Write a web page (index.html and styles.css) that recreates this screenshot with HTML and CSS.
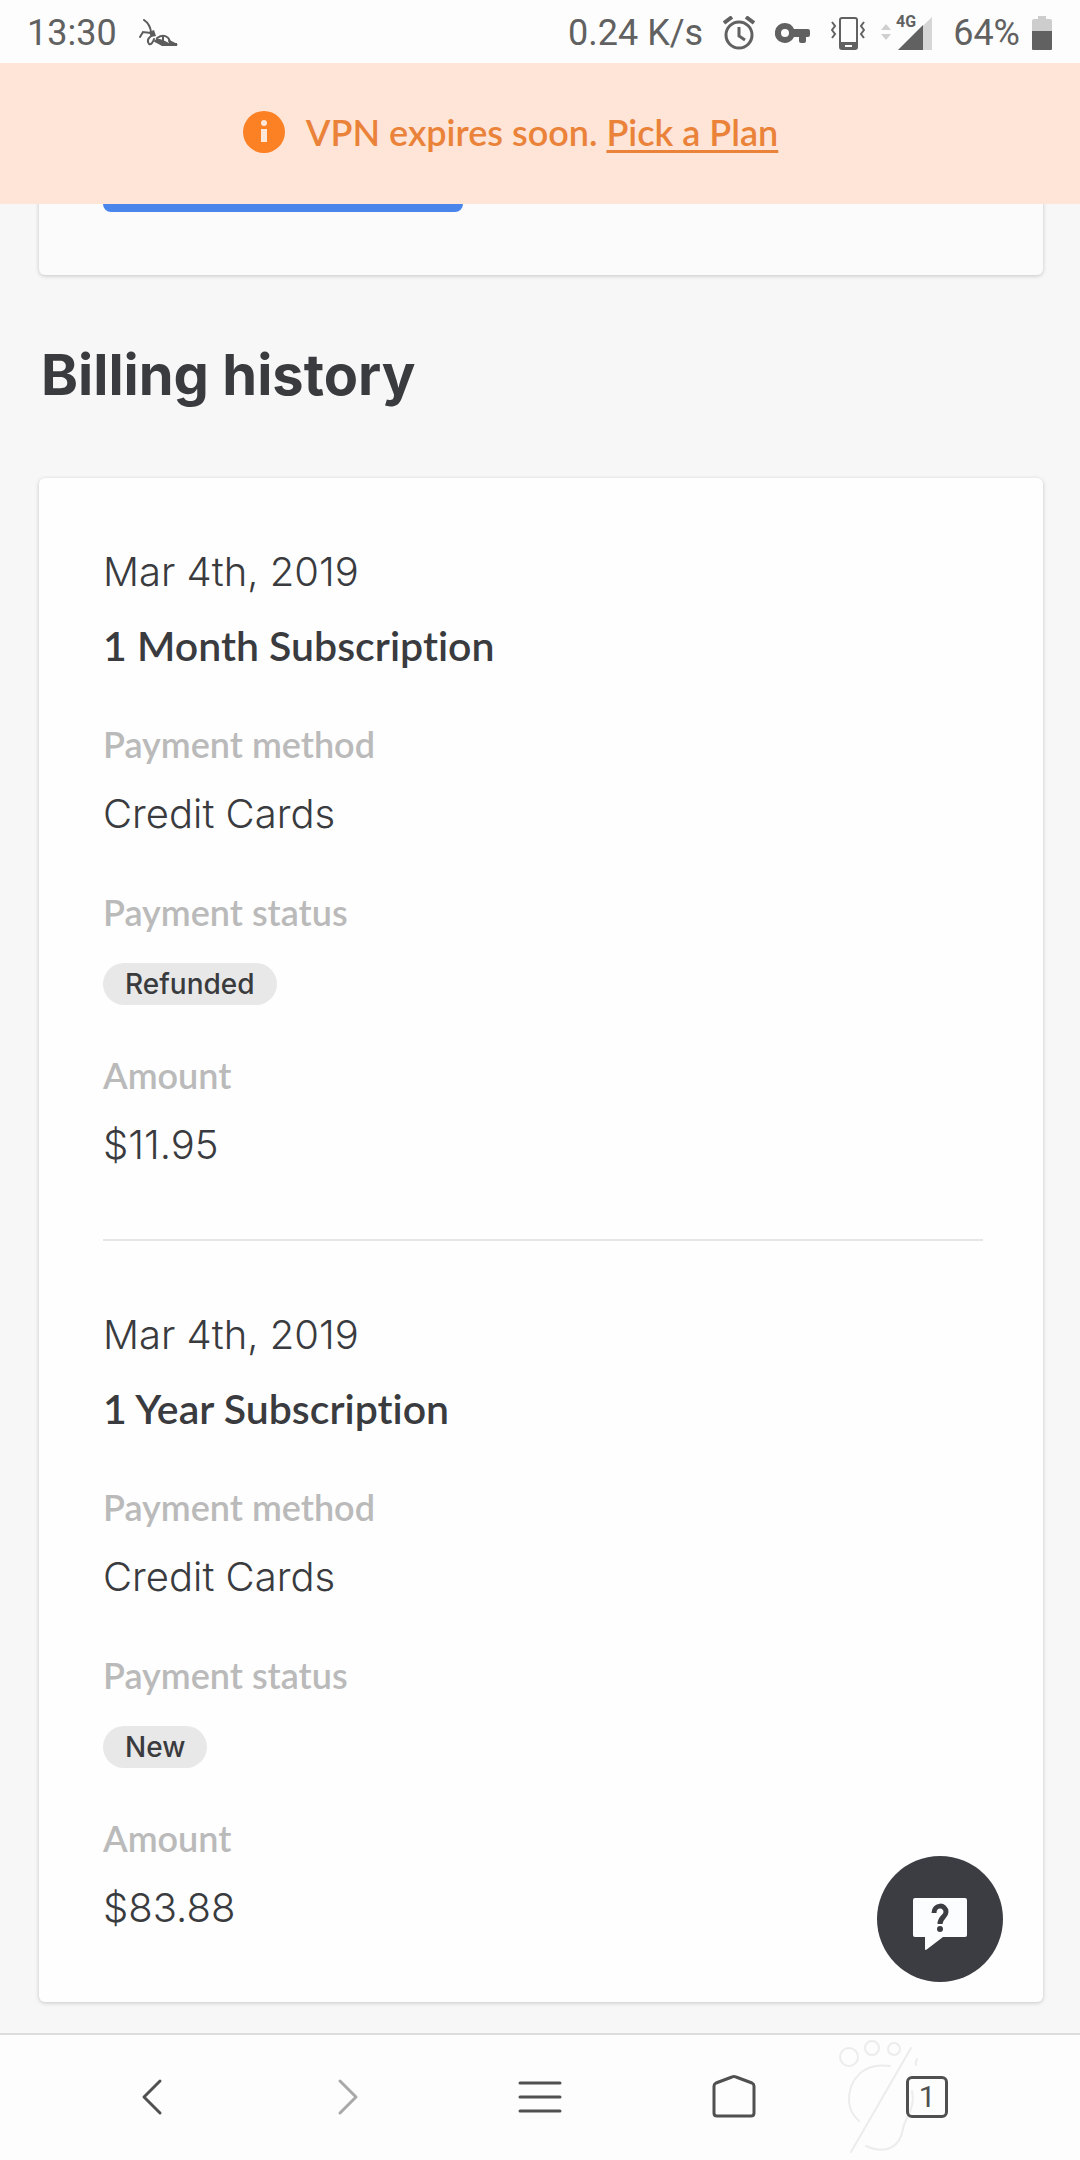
FILE: index.html
```
<!DOCTYPE html>
<html lang="en">
<head>
  <meta charset="UTF-8" />
  <meta name="viewport" content="width=device-width, initial-scale=1" />
  <title>Billing history</title>
  <link rel="stylesheet" href="styles.css">
</head>
<body>

  <header class="top">
    <div class="status-bar">
      <div class="status-left">
        <span>13:30</span>
        <svg class="ant" width="40" height="28" viewBox="0 0 40 28" aria-hidden="true">
          <g fill="none" stroke="#5c5c5c" stroke-width="2" stroke-linecap="round">
            <path d="M5 1 Q11 5 12 13" />
            <path d="M1 18 L4 13 L12 14" />
            <path d="M12 17 Q7 21 10 25 Q13 26 15 20" />
            <path d="M18 19 Q24 15 28 18 Q31 20 31 25" />
            <path d="M16 22 L27 26 H38 L30 22" />
            <path d="M20 21 L26 25 M24 18 L24 24" />
          </g>
          <path d="M10 13 L15 11 L17 17 L12 18 Z M17 19 L24 21 L30 24 L38 24 V27 H23 L16 23 Z" fill="#5c5c5c" />
        </svg>
      </div>
      <div class="status-right">
        <span class="speed">0.24 K/s</span>
        <!-- alarm -->
        <svg width="32" height="34" viewBox="0 0 32 34" aria-hidden="true">
          <g fill="none" stroke="#616161" stroke-width="3">
            <circle cx="16" cy="19" r="13" />
            <path d="M1 7 L9 1 M31 7 L23 1" stroke-width="4" />
            <path d="M16 11 V20 L22 24" />
          </g>
        </svg>
        <!-- vpn key -->
        <svg class="key" width="36" height="22" viewBox="0 0 36 22" aria-hidden="true">
          <path fill="#616161" fill-rule="evenodd" d="M10 1 A10 10 0 1 0 19 15 H24 V19 Q24 21 26 21 H29 Q31 21 31 19 V15 H33 Q35 15 35 13 V9 Q35 7 33 7 H19 A10 10 0 0 0 10 1 Z M10 7 A4 4 0 1 1 10 15 A4 4 0 1 1 10 7 Z" />
        </svg>
        <!-- vibrate -->
        <svg class="vibrate" width="34" height="34" viewBox="0 0 34 34" aria-hidden="true">
          <g fill="none" stroke="#616161" stroke-width="2">
            <rect x="9" y="2" width="17" height="31" rx="2" />
            <path d="M1 6 L4 10 L1 14 L4 18 L1 22" />
            <path d="M33 6 L30 10 L33 14 L30 18 L33 22" />
          </g>
          <path fill="#616161" fill-rule="evenodd" d="M9 26 H26 V33 H9 Z M14 29 V31 H21 V29 Z" />
        </svg>
        <!-- signal -->
        <svg class="signal" width="52" height="44" viewBox="0 -4 52 44" aria-hidden="true">
          <path d="M0 15 L5 9 L10 15 Z M0 19 L5 25 L10 19 Z" fill="#cfcfcf" />
          <path d="M17 35 L51 2 V35 Z" fill="#d6d6d6" />
          <path d="M17 35 L42 10 V35 Z" fill="#616161" />
          <text x="15" y="12" class="net">4G</text>
        </svg>
        <span>64%</span>
        <!-- battery -->
        <svg class="battery" width="20" height="34" viewBox="0 0 20 34" aria-hidden="true">
          <path d="M6 0 H14 V3 H18 Q20 3 20 5 V16 H0 V5 Q0 3 2 3 H6 Z" fill="#cdcdcd" />
          <path d="M0 15 H20 V33 Q20 34 19 34 H1 Q0 34 0 33 Z" fill="#616161" />
        </svg>
      </div>
    </div>

    <div class="notice">
      <svg width="44" height="44" viewBox="0 0 44 44" aria-hidden="true">
        <circle cx="22" cy="22" r="21" fill="#fc8024" />
        <circle cx="22" cy="13" r="3" fill="#fee6d9" />
        <path d="M19 19 H25 V32 H19 Z" fill="#fee6d9" />
      </svg>
      <p>VPN expires soon. <a href="#plans">Pick a Plan</a></p>
    </div>
  </header>

  <main class="content">
    <section class="card plan-card">
      <button class="plan-button" type="button" aria-label="Subscription"></button>
    </section>

    <h1>Billing history</h1>

    <section class="card">
      <article class="entry">
        <p class="date">Mar 4th, 2019</p>
        <h2>1 Month Subscription</h2>
        <dl>
          <div class="field">
            <dt>Payment method</dt>
            <dd>Credit Cards</dd>
          </div>
          <div class="field">
            <dt>Payment status</dt>
            <dd class="state"><span class="badge">Refunded</span></dd>
          </div>
          <div class="field">
            <dt>Amount</dt>
            <dd>$11.95</dd>
          </div>
        </dl>
      </article>

      <article class="entry">
        <p class="date">Mar 4th, 2019</p>
        <h2>1 Year Subscription</h2>
        <dl>
          <div class="field">
            <dt>Payment method</dt>
            <dd>Credit Cards</dd>
          </div>
          <div class="field">
            <dt>Payment status</dt>
            <dd class="state"><span class="badge">New</span></dd>
          </div>
          <div class="field">
            <dt>Amount</dt>
            <dd>$83.88</dd>
          </div>
        </dl>
      </article>
    </section>
  </main>

  <button class="help" type="button" aria-label="Help">
    <svg width="54" height="54" viewBox="0 0 54 54" aria-hidden="true">
      <path d="M2 1 H52 Q54 1 54 3 V38 Q54 40 52 40 H30 L13 53 Q12 53 12 52 V40 H2 Q0 40 0 38 V3 Q0 1 2 1 Z" fill="#fbfdfe" />
      <path d="M21 16 C21 7 33 7 33 15 C33 20 27 20 27 27" fill="none" stroke="#3b3d43" stroke-width="5" />
      <circle cx="27" cy="32" r="3" fill="#3b3d43" />
    </svg>
  </button>

  <nav class="toolbar">
    <svg class="paw" width="90" height="120" viewBox="0 0 90 120" aria-hidden="true">
      <circle cx="13" cy="22" r="9" />
      <circle cx="36" cy="13" r="7" />
      <circle cx="58" cy="14" r="6" />
      <path d="M81 24 Q79 28 80 30" />
      <path d="M54 31 C26 27 12 46 13 67 Q14 78 23 86" />
      <path d="M75 13 L15 117" />
      <path d="M76 56 C80 74 68 84 67 94 C64 112 50 120 30 111" />
    </svg>
    <button type="button" aria-label="Back">
      <svg width="48" height="48" viewBox="0 0 48 48"><path d="M31 8 L15 24 L31 40" /></svg>
    </button>
    <button class="inactive" type="button" aria-label="Forward">
      <svg width="48" height="48" viewBox="0 0 48 48"><path d="M18 8 L34 24 L18 40" /></svg>
    </button>
    <button type="button" aria-label="Menu">
      <svg width="48" height="48" viewBox="0 0 48 48"><path d="M4 10 H44 M4 24 H44 M4 38 H44" /></svg>
    </button>
    <button type="button" aria-label="Home">
      <svg width="48" height="48" viewBox="0 0 48 48"><path d="M4 13 Q4 11 6 10 L22 4 Q24 3 26 4 L42 10 Q44 11 44 13 V40 Q44 43 41 43 H7 Q4 43 4 40 Z" /></svg>
    </button>
    <button type="button" aria-label="Tabs">
      <span class="tab-count">1</span>
    </button>
  </nav>

</body>
</html>
```
FILE: styles.css
```
* { margin: 0; padding: 0; box-sizing: border-box; }

body {
  min-height: 100vh;
  display: flex;
  flex-direction: column;
  background: #f7f7f7;
  color: #3a3b3e;
  font-family: Inter, 'Liberation Sans', sans-serif;
}

svg { display: block; flex-shrink: 0; }

button {
  border: 0;
  background: none;
  font: inherit;
  color: inherit;
  cursor: pointer;
}

/* status bar + notice */
.top {
  position: sticky;
  top: 0;
  z-index: 2;
}

.status-bar {
  display: flex;
  justify-content: space-between;
  align-items: center;
  height: 63px;
  padding: 2px 28px 0 27px;
  background: #fdfdfd;
  color: #616161;
  font-family: Roboto, sans-serif;
  font-size: 36px;
  line-height: 42px;
}

.status-left,
.status-right {
  display: flex;
  align-items: center;
}

.status-left { gap: 22px; }
.speed { margin-right: 20px; }
.key { margin: 0 20px; }
.signal { margin: 0 20px 0 16px; }
.battery { margin-left: 12px; }

.net {
  font: 700 16px Roboto, sans-serif;
  fill: #616161;
}

.notice {
  display: flex;
  justify-content: center;
  align-items: center;
  gap: 20px;
  height: 141px;
  padding: 0 60px 4px 0;
  background: #fee5d8;
  color: #ea8339;
  font-family: Lato, sans-serif;
  font-size: 36px;
  font-weight: 600;
  line-height: 48px;
}

.notice a {
  color: inherit;
  text-decoration-thickness: 3px;
  text-underline-offset: 4px;
}

/* page */
.content {
  flex: 1;
  padding: 0 37px 28px 39px;
}

.card {
  padding: 0 60px 0 64px;
  background: #fefefe;
  border-radius: 6px;
  box-shadow: 0 1px 4px rgba(0, 0, 0, 0.2);
}

.plan-card {
  margin-top: -80px;
  padding-bottom: 63px;
  background: #fbfbfb;
}

.plan-button {
  display: block;
  width: 360px;
  height: 88px;
  border-radius: 8px;
  background: #4a85ec;
}

h1 {
  margin: 64px 0 67px 2px;
  font-size: 56px;
  font-weight: 700;
  line-height: 72px;
}

.entry { padding: 70px 0; }
.entry + .entry { border-top: 2px solid #e6e6e6; }

.date,
dd {
  font-size: 40px;
  font-weight: 300;
  line-height: 48px;
}

h2 {
  margin: 26px 0 54px;
  font-family: Lato, sans-serif;
  font-size: 41px;
  font-weight: 600;
  font-variant-ligatures: none;
  line-height: 48px;
}

dl {
  display: flex;
  flex-direction: column;
  gap: 54px;
}

.field {
  display: flex;
  flex-direction: column;
  gap: 26px;
}

dt {
  color: #bababa;
  font-family: Lato, sans-serif;
  font-size: 36px;
  font-weight: 600;
  line-height: 40px;
}

.state {
  display: flex;
  padding: 5px 0 0;
  margin-bottom: -4px;
}

.badge {
  padding: 0 22px;
  border-radius: 21px;
  background: #e8e8e8;
  font-size: 28px;
  font-weight: 500;
  line-height: 42px;
}

/* floating help button */
.help {
  position: fixed;
  right: 77px;
  bottom: 178px;
  z-index: 3;
  display: flex;
  justify-content: center;
  align-items: center;
  width: 126px;
  height: 126px;
  padding-top: 10px;
  border-radius: 50%;
  background: #3b3d43;
}

/* browser toolbar */
.toolbar {
  position: sticky;
  bottom: 0;
  z-index: 2;
  display: flex;
  height: 127px;
  padding: 0 56px 2px;
  background: #fdfdfd;
  border-top: 2px solid #dcdcdc;
}

.toolbar button {
  position: relative;
  flex: 1;
  display: flex;
  justify-content: center;
  align-items: center;
}

.toolbar path {
  fill: none;
  stroke: #505050;
  stroke-width: 3;
  stroke-linecap: round;
  stroke-linejoin: round;
}

.toolbar .inactive path { stroke: #a8a8a8; }

.toolbar .paw {
  position: absolute;
  right: 154px;
  bottom: 5px;
}

.paw circle,
.toolbar .paw path {
  fill: none;
  stroke: #ececec;
  stroke-width: 2;
}

.tab-count {
  width: 42px;
  height: 42px;
  border: 3px solid #505050;
  border-radius: 6px;
  color: #505050;
  font-family: Roboto, sans-serif;
  font-size: 30px;
  line-height: 36px;
  text-align: center;
}
```
